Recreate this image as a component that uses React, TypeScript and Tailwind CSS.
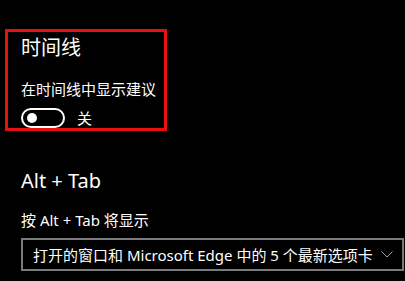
export default function App() {
  return (
    <div
      className="w-[405px] h-[281px] overflow-hidden bg-black text-white"
      style={{ fontFamily: '"Noto Sans", "Noto Sans CJK SC", sans-serif' }}
    >
      <div className="pt-[29px] pl-[5px]">
        <div className="w-[162px] h-[102px] border-[3px] border-[#e81010] pl-[13px] pt-[3px]">
          <div className="text-[20px] leading-[26px]">时间线</div>
          <div className="mt-[18px] text-[15px] leading-[20px]">在时间线中显示建议</div>
          <div className="mt-[9px] flex items-center gap-[12px]">
            <div className="w-[44px] h-[20px] rounded-full border-2 border-white flex items-center pl-[4px]">
              <div className="w-[10px] h-[10px] rounded-full bg-white" />
            </div>
            <span className="text-[15px] leading-[20px]">关</span>
          </div>
        </div>
      </div>

      <div className="pl-[21px] mt-[37px]">
        <div className="text-[20px] leading-[26px]">Alt + Tab</div>
        <div className="mt-[16px] text-[15px] leading-[20px]">按 Alt + Tab 将显示</div>
        <div className="mt-[8px] h-[33px] w-[383px] border-2 border-[#7a7a7a] flex items-center pl-[10px] pr-[9px]">
          <span className="flex-1 text-[15px] leading-[20px] whitespace-nowrap">
            打开的窗口和 Microsoft Edge 中的 5 个最新选项卡
          </span>
          <svg width="12" height="7" viewBox="0 0 12 7" fill="none" className="shrink-0">
            <path d="M0.5 0.5 L6 6 L11.5 0.5" stroke="#a0a0a0" strokeWidth="1" />
          </svg>
        </div>
      </div>
    </div>
  )
}
